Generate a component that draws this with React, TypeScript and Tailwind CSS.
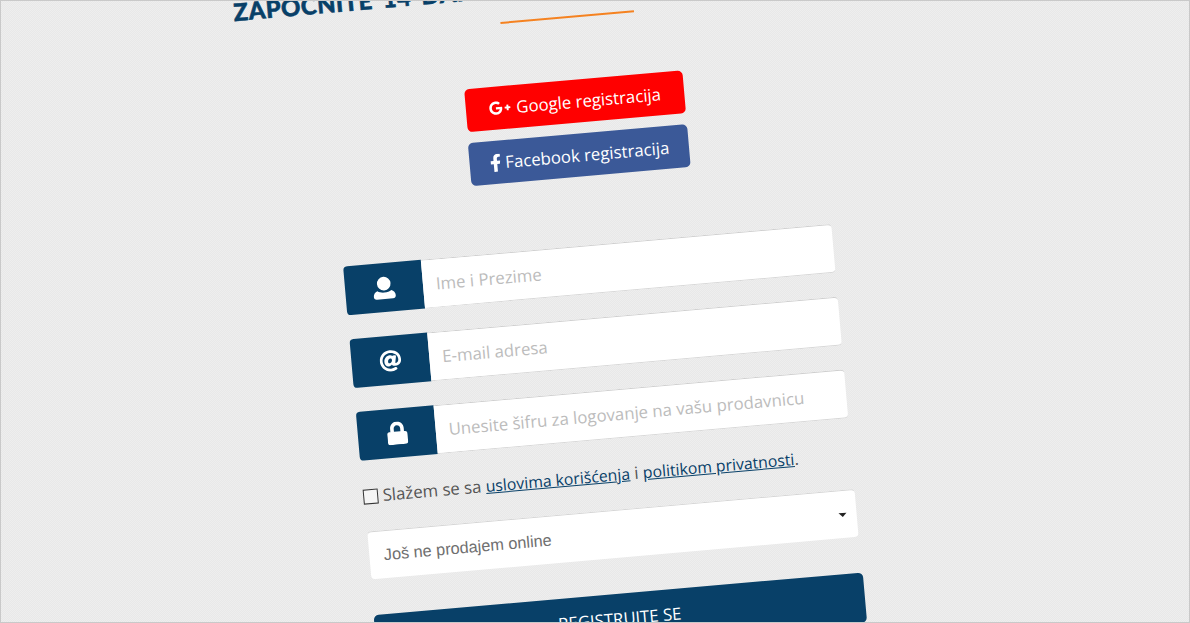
import { FaAt, FaFacebookF, FaGooglePlusG, FaLock } from "react-icons/fa";

const rowClassName = "flex h-[49px] w-[490px] items-stretch";
const iconBoxClassName =
  "flex w-[78px] shrink-0 items-center justify-center rounded-l-[4px] bg-[#084068] text-white";
const inputClassName =
  "w-full rounded-r-[4px] border-t border-b border-t-[#cfcfcf] border-b-[#d8d8d8] bg-white px-[13px] text-[16.8px] outline-none placeholder:text-[#bcbcbc]";

function UserIcon() {
  return (
    <svg viewBox="0 0 24 24" className="h-[24px] w-[24px]" fill="currentColor">
      <circle cx="12" cy="7.500" r="6.800" />
      <path d="M5 14.500c1.800 1.300 4.200 2 7 2s5.200-.7 7-2c2.400.8 4 3 4 5.500 0 2-1 3-3 3H4c-2 0-3-1-3-3 0-2.500 1.600-4.700 4-5.500z" />
    </svg>
  );
}

export default function App() {
  return (
    <div className="h-[623px] w-[1190px] overflow-hidden border border-[#c9c9c9] bg-[#ebebeb] bg-[conic-gradient(#e8e8e8_25%,#eeeeee_0_50%,#e8e8e8_0_75%,#eeeeee_0)] bg-[length:2px_2px] font-['Open_Sans',sans-serif]">
      <div className="relative left-[-2px] mx-auto flex h-[700px] w-[900px] origin-[50%_311px] -rotate-[5deg] flex-col items-center">
        <div className="mt-[-34px] h-[30px] w-[670px] whitespace-nowrap pl-[3px] font-['Lato',sans-serif] text-[24px] leading-[30px] font-black tracking-[0.4px] [word-spacing:4px] text-[#084068] [-webkit-text-stroke:0.5px_#084068]">
          ZAPOCNITE 14 DANA BESPLATNO
        </div>
        <div className="mt-[18px] h-[2px] w-[134px] bg-[#f58220]" />

        <a
          href="#"
          className="mt-[62px] ml-[1px] flex h-[43px] w-[219px] items-center justify-center gap-[5px] rounded-[5px] bg-[#ff0000] text-[16.8px] text-white"
        >
          <FaGooglePlusG className="h-[19px] w-[22px]" />
          Google registracija
        </a>
        <a
          href="#"
          className="mt-[11px] flex h-[43px] w-[220px] items-center justify-center gap-[4px] rounded-[5px] bg-[#3b5998] text-[16.8px] text-white"
        >
          <FaFacebookF className="h-[18px] w-[12px]" />
          Facebook registracija
        </a>

        <div className="mt-[69px] flex flex-col gap-[24px]">
          <div className={rowClassName}>
            <div className={iconBoxClassName}>
              <UserIcon />
            </div>
            <input className={inputClassName} placeholder="Ime i Prezime" />
          </div>
          <div className={rowClassName}>
            <div className={iconBoxClassName}>
              <FaAt className="h-[22px] w-[22px]" />
            </div>
            <input className={inputClassName} placeholder="E-mail adresa" />
          </div>
          <div className={rowClassName}>
            <div className={iconBoxClassName}>
              <FaLock className="h-[23px] w-[21px]" />
            </div>
            <input
              className={inputClassName}
              placeholder="Unesite šifru za logovanje na vašu prodavnicu"
            />
          </div>
        </div>

        <label className="mt-[25px] flex w-[491px] items-center gap-[5px] text-[16.8px] leading-[22px] text-[#555555]">
          <span className="h-[15px] w-[15px] shrink-0 border border-[#333333] bg-[#f5f5f5]" />
          <span>
            Slažem se sa{" "}
            <a href="#" className="text-[15.8px] text-[#084068] underline">
              uslovima korišćenja
            </a>{" "}
            i{" "}
            <a href="#" className="text-[15.8px] text-[#084068] underline">
              politikom privatnosti
            </a>
            .
          </span>
        </label>

        <div className="mt-[24px] flex h-[48px] w-[489px] shrink-0 items-center justify-between rounded-[4px] border-t border-[#d5d5d5] bg-white pr-[10px] pl-[15px] font-['Liberation_Sans',sans-serif] text-[16.300px] text-[#6f6f6f]">
          <span className="pb-[1px]">Još ne prodajem online</span>
          <span className="h-0 w-0 border-x-[4px] border-t-[4px] border-x-transparent border-t-[#222222]" />
        </div>

        <button
          type="button"
          className="mt-[36px] h-[50px] w-[491px] shrink-0 rounded-[5px] bg-[#084068] text-[16.8px] text-white"
        >
          REGISTRUJTE SE
        </button>
      </div>
    </div>
  );
}
